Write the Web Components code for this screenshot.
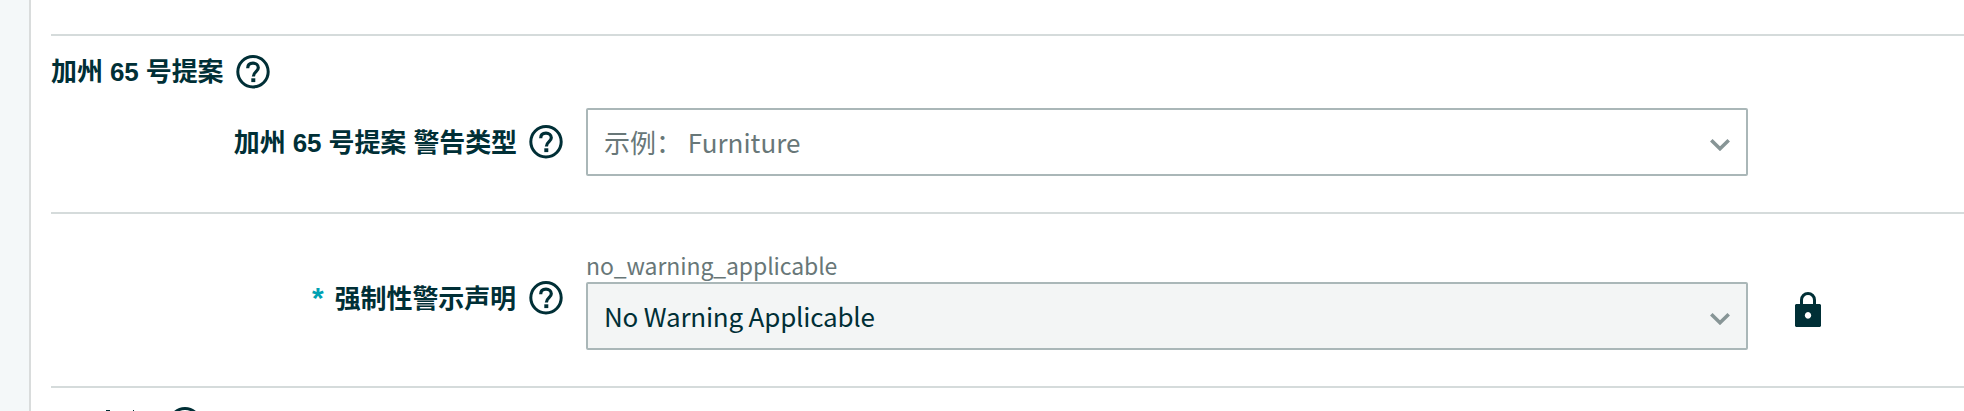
<!DOCTYPE html>
<html lang="zh-CN"><head><meta charset="utf-8"><title>合规信息</title>
<style>html,body{margin:0;height:411px;overflow:hidden;background:#fff}</style></head>
<body><compliance-page></compliance-page>
<script>
const define=(name,html)=>customElements.define(name,class extends HTMLElement{
  constructor(){super();const t=document.createElement('template');t.innerHTML=html;
    this.attachShadow({mode:'open'}).append(t.content.cloneNode(true));}
});
define('help-icon',`<style>:host{display:block;width:34px;height:34px;flex:none;white-space:normal}svg{display:block}</style>
<svg width="34" height="34" viewBox="0 0 34 34" fill="none" stroke="#002f36"><circle cx="17" cy="16.7" r="15.2" stroke-width="3"/><path d="M11.7 13.2C11.7 9.8 14 8.2 17 8.2S22.3 10 22.3 12.8C22.3 16.5 17.4 16.8 17.4 21.4" stroke-width="3.2"/><path d="M15.3 25.2h4" stroke-width="3.8"/></svg>`);
define('lock-icon',`<style>:host{display:block;width:26px;height:35px;flex:none}svg{display:block}</style>
<svg width="26" height="35" viewBox="0 0 26 35"><path d="M6.5 13V8a6.5 6.5 0 0 1 13 0v5" fill="none" stroke="#002f36" stroke-width="3"/><path fill="#002f36" fill-rule="evenodd" d="M1 12h24l1 1v21l-1 1H1l-1-1V13zM13 20a3.2 3.4 0 1 0 .01 0z"/></svg>`);
define('field-label',`<style>:host{display:flex;align-items:center;gap:var(--label-gap,12px);height:34px;font:bold 26px/34px "Liberation Sans","Noto Sans CJK SC",sans-serif;letter-spacing:-.1px;color:#002f36;white-space:pre}.t{padding-top:var(--label-shift,0px)}</style><span class="t"><slot></slot></span><help-icon></help-icon>`);
define('select-box',`<style>:host{display:flex;box-sizing:border-box;width:1162px;height:68px;border:2px solid #aab7b8;border-radius:2px;padding:0 16px;align-items:center;justify-content:space-between;background:#fff;font:26px/34px "Noto Sans CJK SC",sans-serif;letter-spacing:-.2px;color:#687778;white-space:pre}
:host([locked]){background:#f3f5f5;color:#002f36}svg{display:block;margin-top:5px}</style><span><slot></slot></span><svg width="20" height="12" viewBox="0 0 20 12"><path d="M1.3 1.3 10 9.7 18.7 1.3" fill="none" stroke="#879596" stroke-width="3.6"/></svg>`);
define('form-section',`<style>:host{display:block;box-sizing:border-box;border-top:2px solid #d5dbdb}</style><slot></slot>`);
define('compliance-page',`<style>
:host{display:flex;height:411px;overflow:hidden}
aside{box-sizing:border-box;width:31px;background:#f4f8f9;border-right:2px solid #d9dcdc;flex:none}
main{flex:1;padding:34px 0 0 20px;min-width:0}
.a{height:178px}.b{height:174px}.c{height:60px}
.head{margin-top:19px;--label-gap:13px}.row{display:grid;grid-template-columns:512px 1185px 26px}
.row field-label{justify-content:flex-end;--label-shift:2px}
.row>select-box,.col{margin-left:23px}
.r1{margin-top:19px}.r1 field-label{margin-top:17px}
.r1 select-box span{letter-spacing:0}
.r2{padding-top:36px}.r2 field-label{margin-top:31px;--label-gap:13px}
.hint{font:23px/32px "Noto Sans CJK SC",sans-serif;letter-spacing:-.1px;color:#687778;height:33px;margin-top:-1px}
.star{color:#00a1b2;font-size:30px;line-height:30px;margin-right:11px}
lock-icon{margin:42px 0 0 47px}
.last{display:flex;align-items:flex-start;margin-top:19px;height:34px}
.edge{width:117px;height:4px;display:flex;align-items:flex-end}
.edge i{display:block;height:1px;background:#002f36;width:4px;margin-left:55px}
.edge i+i{width:1px;margin-left:23px}
</style><aside></aside><main>
<form-section class="a"><field-label class="head">加州 65 号提案</field-label>
<div class="row r1"><field-label>加州 65 号提案 警告类型</field-label><select-box><span>示例： Furniture</span></select-box></div></form-section>
<form-section class="b"><div class="row r2"><field-label><span class="star">*</span>强制性警示声明</field-label><div class="col"><div class="hint"><span>no_warning_applicable</span></div><select-box locked><span>No Warning Applicable</span></select-box></div><lock-icon></lock-icon></div></form-section>
<form-section class="c"><div class="last"><div class="edge"><i></i><i></i></div><help-icon></help-icon></div></form-section>
</main>`);
</script></body></html>
